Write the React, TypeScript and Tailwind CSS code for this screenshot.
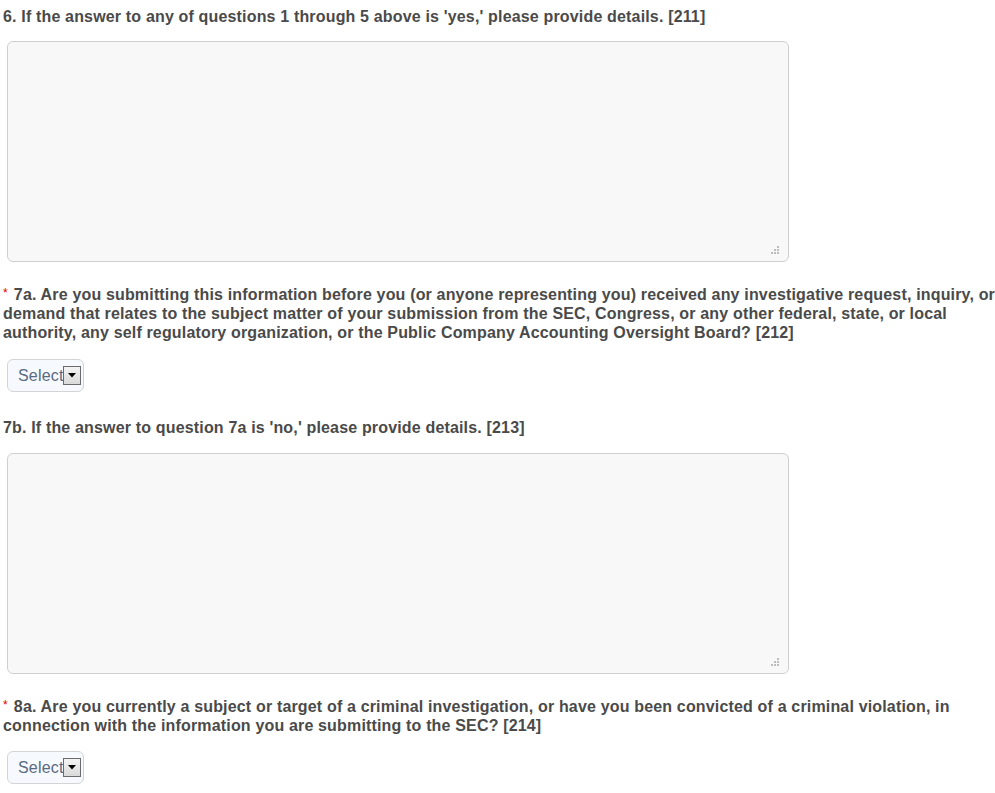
import React from "react";

const font = { fontFamily: '"Liberation Sans", Arial, sans-serif' };

function Label({ req, children, className = "" }: { req?: boolean; children: React.ReactNode; className?: string }) {
  return (
    <div className={`pl-[3px] mr-[-12px] text-[16px] leading-[19px] font-bold tracking-[0.165px] text-[#4a4a4a] ${className}`}>
      {req && <span className="inline-block relative top-[2px] text-[#e00000] text-[12px] font-normal leading-[12px] align-top mr-[6px]">*</span>}
      {children}
    </div>
  );
}

function TextArea({ className = "" }: { className?: string }) {
  return (
    <div className={`relative ml-[7px] w-[782px] h-[221px] rounded-[6px] border border-[#cfcfcf] bg-[#f8f8f8] ${className}`}>
      <svg className="absolute right-[8px] bottom-[6px]" width="10" height="10" viewBox="0 0 10 10">
        <rect x="7" y="1" width="2" height="2" fill="#bdbdbd" />
        <rect x="4" y="4" width="2" height="2" fill="#bdbdbd" />
        <rect x="7" y="4" width="2" height="2" fill="#bdbdbd" />
        <rect x="1" y="7" width="2" height="2" fill="#bdbdbd" />
        <rect x="4" y="7" width="2" height="2" fill="#bdbdbd" />
        <rect x="7" y="7" width="2" height="2" fill="#bdbdbd" />
      </svg>
    </div>
  );
}

function Select({ className = "" }: { className?: string }) {
  return (
    <div className={`ml-[7px] w-[77px] h-[33px] rounded-[6px] border border-[#d4d4d4] bg-[#f6faff] flex items-center pl-[10px] ${className}`}>
      <span className="text-[16px] text-[#5a6a80] leading-none font-normal tracking-[0.2px] mt-[1px]">Select</span>
      <span className="ml-[-1px] w-[18px] h-[19px] border border-[#6b6b6b] bg-gradient-to-b from-[#f4f4f4] to-[#d9d9d9] flex items-center justify-center">
        <svg width="8" height="5" viewBox="0 0 8 5">
          <polygon points="0,0 8,0 4,4.5" fill="#000" />
        </svg>
      </span>
    </div>
  );
}

export default function App() {
  return (
    <div className="w-[995px] h-[793px] bg-white overflow-hidden pt-[7px]" style={font}>
      <Label>6. If the answer to any of questions 1 through 5 above is 'yes,' please provide details. [211]</Label>
      <TextArea className="mt-[15px]" />
      <Label req className="mt-[23px]">
        7a. Are you submitting this information before you (or anyone representing you) received any investigative request, inquiry, or demand that relates to the subject matter of your submission from the SEC, Congress, or any other federal, state, or local authority, any self regulatory organization, or the Public Company Accounting Oversight Board? [212]
      </Label>
      <Select className="mt-[17px]" />
      <Label className="mt-[26px]">7b. If the answer to question 7a is 'no,' please provide details. [213]</Label>
      <TextArea className="mt-[16px]" />
      <Label req className="mt-[23px]">
        8a. Are you currently a subject or target of a criminal investigation, or have you been convicted of a criminal violation, in connection with the information you are submitting to the SEC? [214]
      </Label>
      <Select className="mt-[16px]" />
    </div>
  );
}
